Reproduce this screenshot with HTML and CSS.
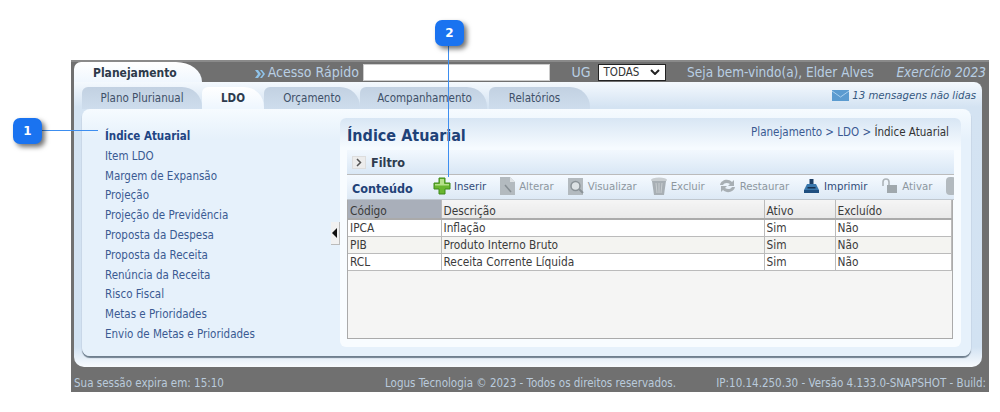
FILE: index.html
```html
<!DOCTYPE html>
<html lang="pt">
<head>
<meta charset="utf-8">
<title>Índice Atuarial</title>
<link rel="stylesheet" href="styles.css">
</head>
<body>
<div class="app">
  <header class="topbar">
    <div class="system-tab">Planejamento</div>
    <div class="quick">
      <svg class="chev" viewBox="0 0 11 10" width="11" height="10"><path d="M0 1h3l3 4-3 4H0l3-4zM5 1h2l3 4-3 4H5l3-4z" fill="#8fc3ea"/></svg>
      <span>Acesso Rápido</span>
      <input class="quick-input" type="text" aria-label="Acesso Rápido">
    </div>
    <div class="ug"><span>UG</span>
      <div class="select"><span>TODAS</span><svg viewBox="0 0 10 6" width="10" height="6"><path d="M1 1l4 4 4-4" fill="none" stroke="#222" stroke-width="2"/></svg></div>
    </div>
    <div class="welcome">Seja bem-vindo(a), Elder Alves</div>
    <div class="year">Exercício 2023</div>
  </header>
  <div class="shell">
    <nav class="tabs">
      <div class="tab first">Plano Plurianual</div>
      <div class="tab active">LDO</div>
      <div class="tab">Orçamento</div>
      <div class="tab wide">Acompanhamento</div>
      <div class="tab">Relatórios</div>
      <div class="messages">
        <svg viewBox="0 0 17 11" width="17" height="11"><rect width="17" height="11" fill="#5b9bd0"/><path d="M0 1l8.500 6L17 1" fill="none" stroke="#a9cfee" stroke-width="1"/></svg>
        <span>13 mensagens não lidas</span>
      </div>
    </nav>
    <div class="panel">
      <aside class="side">
        <a class="current">Índice Atuarial</a>
        <a>Item LDO</a>
        <a>Margem de Expansão</a>
        <a>Projeção</a>
        <a>Projeção de Previdência</a>
        <a>Proposta da Despesa</a>
        <a>Proposta da Receita</a>
        <a>Renúncia da Receita</a>
        <a>Risco Fiscal</a>
        <a>Metas e Prioridades</a>
        <a>Envio de Metas e Prioridades</a>
      </aside>
      <div class="collapse"></div>
      <main class="content">
        <div class="title-row">
          <h1>Índice Atuarial</h1>
          <div class="crumbs">Planejamento &gt; LDO &gt; <b>Índice Atuarial</b></div>
        </div>
        <div class="filter">
          <span class="toggle"><svg viewBox="0 0 6 9" width="6" height="9"><path d="M1 1l3.500 3.500L1 8" fill="none" stroke="#555" stroke-width="1.500"/></svg></span>
          <strong>Filtro</strong>
        </div>
        <div class="toolbar">
          <strong class="label">Conteúdo</strong>
          <span class="tool on ins"><svg viewBox="0 0 18 18" width="18" height="18"><path d="M6 1h6v5h5v6h-5v5H6v-5H1V6h5z" fill="#69b62f" stroke="#3f8a1c"/><path d="M7 2h4v5H7zM2 7h14v1.500H2z" fill="#b5e08a"/></svg>Inserir</span>
          <span class="tool off"><svg viewBox="0 0 15 18" width="15" height="18"><path d="M0 0h10l5 5v13H0z" fill="#b3babf"/><path d="M10 0l5 5h-5z" fill="#dfe3e6"/><path d="M5 8l6 7" stroke="#858d92" stroke-width="1.500"/></svg>Alterar</span>
          <span class="tool off"><svg viewBox="0 0 16 18" width="16" height="18"><rect y="1" width="15" height="17" fill="#b3babf"/><circle cx="7.500" cy="9" r="4.500" fill="#dde2e5" stroke="#8b9398" stroke-width="1.500"/><path d="M11 12l4 4" stroke="#8b9398" stroke-width="2"/></svg>Visualizar</span>
          <span class="tool off"><svg viewBox="0 0 16 18" width="16" height="18"><ellipse cx="8" cy="3" rx="8" ry="2.500" fill="#c9ced1"/><path d="M1 4h14l-2 14H3z" fill="#a8afb4"/><path d="M5 6l1 10M8 6v10M11 6l-1 10" stroke="#c9ced1"/></svg>Excluir</span>
          <span class="tool off"><svg viewBox="0 0 17 16" width="17" height="16"><path d="M1 7c1-5 8-7 12-3l2-2v6H9l2-2C8 4 5 5 4 7z" fill="#a8afb4"/><path d="M16 9c-1 5-8 7-12 3l-2 2V8h6l-2 2c3 2 6 1 7-1z" fill="#a8afb4"/></svg>Restaurar</span>
          <span class="tool on"><svg viewBox="0 0 17 16" width="17" height="16"><path d="M6.500 1h4v5h-4z" fill="#1d3f66"/><path d="M4 6h9l3 6H1z" fill="#3a78ad"/><rect x="1" y="12" width="15" height="3" fill="#1f4f80"/><rect x="4.500" y="9" width="8" height="1.500" fill="#16304f"/></svg>Imprimir</span>
          <span class="tool off"><svg viewBox="0 0 17 16" width="17" height="16"><path d="M2 8V4a3 3 0 0 1 6 0v3" fill="none" stroke="#adb4b9" stroke-width="1.600"/><rect x="6" y="7" width="10" height="8" fill="#a0a8ad"/></svg>Ativar</span>
          <span class="tool off"><svg viewBox="0 0 14 18" width="14" height="18"><rect x="0" y="0" width="10" height="18" rx="4" fill="#b3babf"/></svg></span>
        </div>
        <div class="grid">
          <table>
            <colgroup><col class="c1"><col class="c2"><col class="c3"><col class="c4"></colgroup>
            <thead>
              <tr><th class="sorted">Código</th><th>Descrição</th><th>Ativo</th><th>Excluído</th></tr>
            </thead>
            <tbody>
              <tr><td>IPCA</td><td>Inflação</td><td>Sim</td><td>Não</td></tr>
              <tr class="alt"><td>PIB</td><td>Produto Interno Bruto</td><td>Sim</td><td>Não</td></tr>
              <tr><td>RCL</td><td>Receita Corrente Líquida</td><td>Sim</td><td>Não</td></tr>
            </tbody>
          </table>
        </div>
      </main>
    </div>
  </div>
  <footer class="status">
    <span class="session">Sua sessão expira em: 15:10</span>
    <span>Logus Tecnologia © 2023 - Todos os direitos reservados.</span>
    <span class="build">IP:10.14.250.30 - Versão 4.133.0-SNAPSHOT - Build:</span>
  </footer>
</div>
<div class="line line-h"></div>
<div class="line line-v"></div>
<div class="badge b1">1</div>
<div class="badge b2">2</div>
</body>
</html>
```
FILE: styles.css
```css
* { box-sizing: border-box; }
html, body { margin: 0; height: 100%; background: #fff; overflow: hidden; }
body { font-family: "DejaVu Sans", sans-serif; font-stretch: condensed; font-size: 11.500px; position: relative; }

.app { width: 918px; height: 332px; margin: 60px 0 0 71px; background: #707070; border-top: 2px solid #8a8a8a; padding: 0 3px; display: flex; flex-direction: column; }

.topbar { height: 20px; display: flex; align-items: center; color: #b9cfe4; font-size: 14px; flex: none; }
.system-tab { width: 128px; height: 20px; padding: 4px 0 0 19px; margin-right: 53px; background: linear-gradient(#fff, #f0f7fe); border-radius: 7px 26px 0 0 / 7px 20px 0 0; color: #2d3a4a; font-weight: 700; font-size: 12px; }
.quick { display: flex; align-items: center; width: 318px; }
.chev { margin-right: 2px; margin-top: 3px; }
.quick-input { width: 187px; height: 17px; margin-left: 4px; border: 1px solid #ccc; background: #fff; padding: 0; }
.ug { display: flex; align-items: center; gap: 7px; width: 116px; }
.select { width: 68px; height: 17px; background: #fff; border: 1px solid #222; color: #333; font-size: 11.500px; display: flex; align-items: center; justify-content: space-between; padding: 0 5px; }
.welcome { width: 210px; white-space: nowrap; font-size: 13.500px; }
.year { font-style: italic; white-space: nowrap; font-size: 13.500px; }

.shell { flex: none; width: 908px; height: 285px; background: linear-gradient(#f4f9fe 0, #d4e3f2 25px, #d2e2f2 265px, #f8fbfe 100%); border-radius: 0 8px 10px 10px; padding: 5px 11px 0 8px; display: flex; flex-direction: column; }
.tabs { height: 22px; display: flex; align-items: flex-end; flex: none; color: #3f5068; }
.tab { height: 22px; width: 120px; padding-top: 4px; text-align: center; background: linear-gradient(#c2d1e2, #cedded); border-radius: 6px 20px 0 0 / 6px 20px 0 0; }
.tab.first { width: 120px; }
.tab.active { width: 62px; background: linear-gradient(#fff, #eef6fe); font-weight: 700; color: #2e3b4e; }
.tab:nth-child(3) { width: 96px; }
.tab.wide { width: 127px; padding-left: 2px; }
.tab:nth-child(5) { width: 101px; margin-left: 2px; padding-right: 10px; }
.messages { margin-left: auto; align-self: center; display: flex; align-items: center; gap: 3px; color: #35587f; font-style: italic; font-size: 11.300px; margin-right: -5px; margin-bottom: 5px; }

.panel { flex: none; height: 247px; background: linear-gradient(#f6fbff, #e6f1fb 30px); border-radius: 8px; box-shadow: 0 2px 1px #6f7f8e; display: flex; position: relative; }
.side { width: 258px; flex: none; padding: 17px 0 0 23px; display: flex; flex-direction: column; color: #3a5a92; }
.side a { height: 19.800px; line-height: 20px; white-space: nowrap; }
.side a.current { font-weight: 700; color: #1f4584; }
.collapse { position: absolute; left: 249px; top: 113px; width: 9px; height: 23px; background: #f1f1f1; border-right: 1px solid #bbb; border-bottom: 1px solid #bbb; }
.collapse::after { content: ""; position: absolute; left: 1px; top: 6px; border: 5px solid transparent; border-left-width: 0; border-right: 5px solid #111; }

.content { flex: none; width: 621px; height: 229px; margin-top: 9px; background: #f8fcff; border-radius: 6px; padding: 0 7px; display: flex; flex-direction: column; }
.title-row { height: 32px; flex: none; display: flex; justify-content: space-between; align-items: flex-start; background: linear-gradient(#d8e6f4, #f6fbff 30px); margin: 0 -7px; padding: 7px 12px 0 7px; border-radius: 6px 6px 0 0; }
h1 { margin: 0; font-size: 16px; font-weight: 700; color: #1f4278; line-height: 22px; }
.crumbs { color: #3a5a92; }
.crumbs b { font-weight: 400; color: #333; }
.filter { height: 25px; flex: none; background: linear-gradient(#f2f8fe, #d9e7f5); display: flex; align-items: center; gap: 5px; padding-left: 5px; color: #2e3b4e; font-size: 12.500px; border-bottom: 1px solid #bbb; }
.toggle { width: 14px; height: 13px; background: #ececec; border: 1px solid #ddd; display: flex; align-items: center; justify-content: center; }
.toolbar { height: 25px; flex: none; background: linear-gradient(#f5faff, #dde9f5); display: flex; align-items: center; padding-left: 5px; overflow: hidden; border-bottom: 1px solid #c0c7ce; font-size: 11.300px; }
.label { width: 81px; color: #1f4278; font-size: 12.500px; flex: none; padding-top: 2px; }
.tool { display: inline-flex; align-items: center; gap: 4px; flex: none; margin-right: 14px; padding-bottom: 2px; white-space: nowrap; }
.tool.ins { gap: 3px; }
.tool.on { color: #2f4a78; }
.tool.off { color: #8d979f; }
.grid { height: 139px; flex: none; background: #f5f5f4; border: 1px solid #aaa; border-top: 0; width: 606px; }
table { width: 100%; border-collapse: collapse; table-layout: fixed; color: #3b3b3b; font-size: 11.800px; }
.c1 { width: 93px; } .c2 { width: 323px; } .c3 { width: 71px; }
th { height: 19px; font-weight: 400; text-align: left; padding: 3px 0 0 2px; background: linear-gradient(#f5f5f5, #e9e9e9); border-right: 1px solid #bbb; border-bottom: 2px solid #aaa; }
th.sorted { background: #a9afba; }
td { height: 17px; padding: 1px 0 0 2px; background: #fff; border-right: 1px solid #bbb; border-bottom: 1px solid #bbb; }
.alt td { background: #f4f4f1; }

.status { flex: 1; display: flex; align-items: center; color: #bacbdc; padding-top: 6px; white-space: nowrap; }
.session { width: 311px; }
.build { margin-left: auto; }

.badge { position: absolute; width: 29px; height: 26px; background: #1a73f0; color: #fff; font-weight: 700; font-size: 12px; font-stretch: normal; border-radius: 7px; display: flex; align-items: center; justify-content: center; box-shadow: 3px 3px 5px rgba(0,0,0,.55); }
.b1 { left: 13px; top: 118px; }
.b2 { left: 435px; top: 20px; }
.line { position: absolute; background: #3d8ef0; }
.line-h { left: 41px; top: 130px; width: 57px; height: 1px; }
.line-v { left: 448px; top: 46px; width: 1px; height: 131px; }
```
